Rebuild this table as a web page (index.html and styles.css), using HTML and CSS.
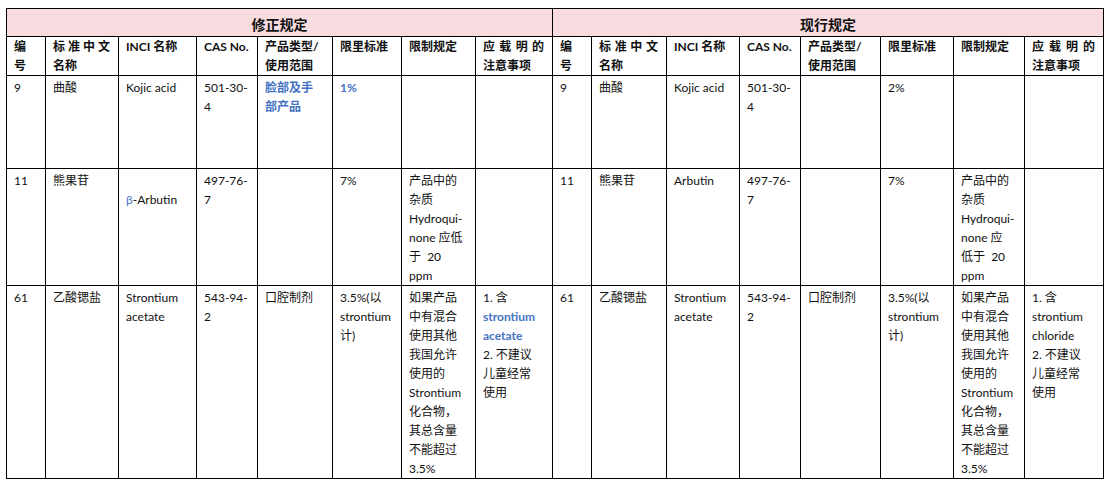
FILE: index.html
```html
<!DOCTYPE html>
<html lang="zh">
<head>
<meta charset="utf-8">
<title>修正规定 / 现行规定</title>
<link rel="stylesheet" href="styles.css">
</head>
<body>
<table class="grid">
  <colgroup>
    <col class="c39"><col class="c73"><col class="c78"><col class="c61"><col class="c75"><col class="c69"><col class="c74"><col class="c77">
    <col class="c39"><col class="c75"><col class="c73"><col class="c61"><col class="c80"><col class="c73"><col class="c71"><col class="c79">
  </colgroup>
  <tr class="title-row">
    <th colspan="8">修正规定</th>
    <th colspan="8">现行规定</th>
  </tr>
  <tr class="head-row">
    <th>编<br>号</th><th><span class="jline">标准中文</span>名称</th><th>INCI 名称</th><th>CAS No.</th><th>产品类型/<br>使用范围</th><th>限里标准</th><th>限制规定</th><th><span class="jline">应载明的</span>注意事项</th>
    <th>编<br>号</th><th><span class="jline">标准中文</span>名称</th><th>INCI 名称</th><th>CAS No.</th><th>产品类型/<br>使用范围</th><th>限里标准</th><th>限制规定</th><th><span class="jline">应载明的</span>注意事项</th>
  </tr>
  <tr class="row-a">
    <td>9</td><td>曲酸</td><td>Kojic acid</td><td>501-30-<br>4</td><td class="blue bold">脸部及手<br>部产品</td><td class="blue bold">1%</td><td></td><td></td>
    <td>9</td><td>曲酸</td><td>Kojic acid</td><td>501-30-<br>4</td><td></td><td>2%</td><td></td><td></td>
  </tr>
  <tr class="row-b">
    <td>11</td><td>熊果苷</td><td><br><span class="blue">β</span>-Arbutin</td><td>497-76-<br>7</td><td></td><td>7%</td><td>产品中的<br>杂质<br>Hydroqui-<br>none 应低<br>于&nbsp; 20<br>ppm</td><td></td>
    <td>11</td><td>熊果苷</td><td>Arbutin</td><td>497-76-<br>7</td><td></td><td>7%</td><td>产品中的<br>杂质<br>Hydroqui-<br>none 应<br>低于&nbsp; 20<br>ppm</td><td></td>
  </tr>
  <tr class="row-c">
    <td>61</td><td>乙酸锶盐</td><td>Strontium<br>acetate</td><td>543-94-<br>2</td><td>口腔制剂</td><td>3.5%(以<br>strontium<br>计)</td><td>如果产品<br>中有混合<br>使用其他<br>我国允许<br>使用的<br>Strontium<br>化合物，<br>其总含量<br>不能超过<br>3.5%</td><td>1. 含<br><span class="blue bold">strontium<br>acetate</span><br>2. 不建议<br>儿童经常<br>使用</td>
    <td>61</td><td>乙酸锶盐</td><td>Strontium<br>acetate</td><td>543-94-<br>2</td><td>口腔制剂</td><td>3.5%(以<br>strontium<br>计)</td><td>如果产品<br>中有混合<br>使用其他<br>我国允许<br>使用的<br>Strontium<br>化合物，<br>其总含量<br>不能超过<br>3.5%</td><td>1. 含<br>strontium<br>chloride<br>2. 不建议<br>儿童经常<br>使用</td>
  </tr>
</table>
</body>
</html>
```

FILE: styles.css
```css
html, body {
  margin: 0;
  padding: 0;
  background: #fff;
}
body {
  padding: 8px 0 0 6px;
  font-family: Lato, "Noto Sans CJK SC", sans-serif;
  font-size: 12px;
  color: #111;
}
.grid {
  border-collapse: collapse;
  table-layout: fixed;
  width: 1098px;
}
.c39 { width: 39px; }
.c61 { width: 61px; }
.c69 { width: 69px; }
.c71 { width: 71px; }
.c73 { width: 73px; }
.c74 { width: 74px; }
.c75 { width: 75px; }
.c77 { width: 77px; }
.c78 { width: 78px; }
.c79 { width: 79px; }
.c80 { width: 80px; }
.grid th,
.grid td {
  border: 1px solid #000;
  padding: 2px 7px 0 7px;
  vertical-align: top;
  text-align: left;
  line-height: 19px;
  overflow: hidden;
}
.title-row th {
  background: #f8dce0;
  text-align: center;
  font-size: 14px;
  font-weight: 700;
  height: 28px;
  padding: 0;
  vertical-align: middle;
  line-height: 20px;
  padding-top: 4px;
  box-sizing: border-box;
}
.head-row th {
  font-weight: 700;
  padding-top: 0;
  height: 38px;
  box-sizing: border-box;
  line-height: 19px;
  white-space: nowrap;
}
.jline {
  display: block;
  text-align: justify;
  text-align-last: justify;
  padding-right: 1px;
}
.row-a td {
  height: 93px;
  box-sizing: border-box;
}
.blue {
  color: #4472c4;
}
.bold {
  font-weight: 700;
}
```
